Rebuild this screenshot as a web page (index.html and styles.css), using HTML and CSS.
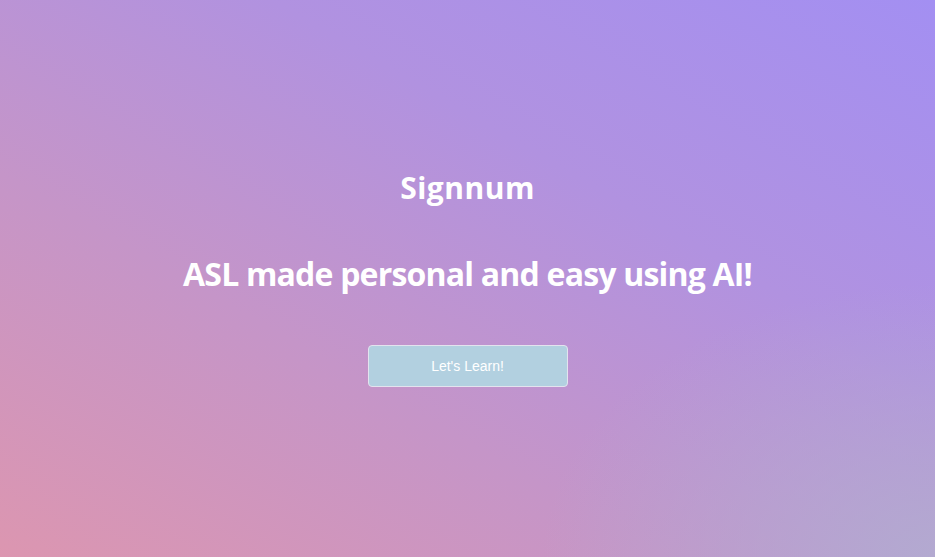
FILE: index.html
```html
<!DOCTYPE html>
<html lang="en">
<head>
<meta charset="utf-8">
<title>Signnum</title>
<link rel="stylesheet" href="styles.css">
</head>
<body>
<main class="hero">
  <h2 class="brand">Signnum</h2>
  <h1 class="tagline">ASL made personal and easy using AI!</h1>
  <button class="cta" type="button">Let's Learn!</button>
</main>
</body>
</html>
```
FILE: styles.css
```css
html, body {
  margin: 0;
  padding: 0;
  height: 100%;
}
body {
  font-family: "Open Sans", "Noto Sans", sans-serif;
  color: #fff;
  background:
    radial-gradient(ellipse 60% 70% at 100% 100%, rgba(178, 172, 208, 0.9), rgba(178, 172, 208, 0) 70%),
    linear-gradient(30deg, #dc96b0 0%, #c595c8 35%, #b192e0 65%, #a38ff2 100%);
}
.hero {
  min-height: 100%;
  box-sizing: border-box;
  display: flex;
  flex-direction: column;
  align-items: center;
  padding-top: 168px;
}
.brand {
  margin: 0;
  font-size: 30px;
  font-weight: 700;
  letter-spacing: 0.5px;
  line-height: 40px;
}
.tagline {
  margin: 44px 0 0;
  font-size: 32px;
  font-weight: 700;
  letter-spacing: -0.8px;
  line-height: 44px;
}
.cta {
  margin-top: 49px;
  width: 200px;
  height: 42px;
  background: #b2d0e0;
  border: 1px solid #e3e3ee;
  border-radius: 4px;
  color: #fff;
  font-family: "Liberation Sans", Arial, sans-serif;
  font-size: 14px;
}
```
